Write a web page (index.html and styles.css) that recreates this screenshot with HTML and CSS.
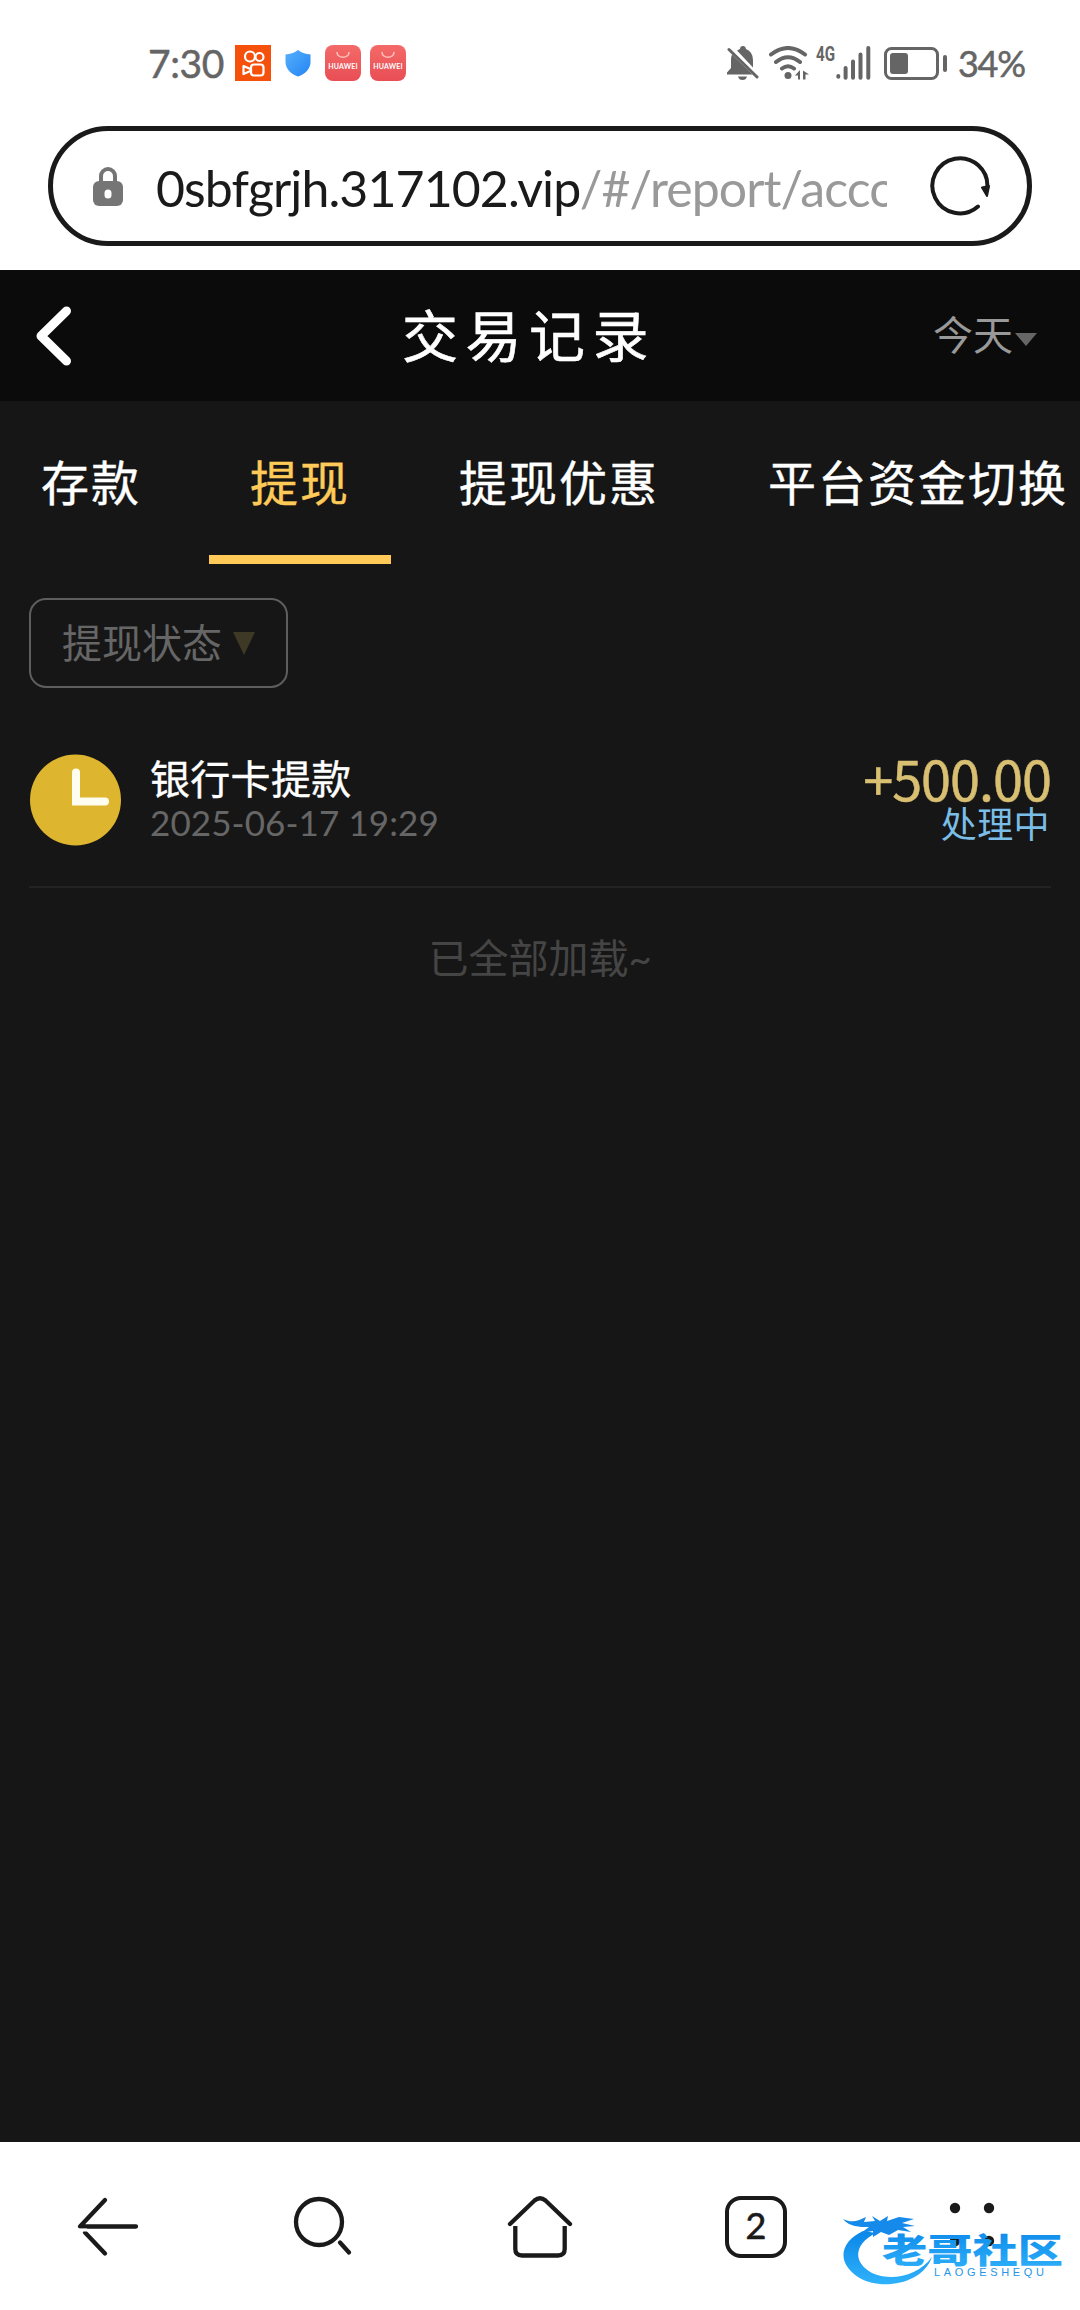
FILE: index.html
```html
<!DOCTYPE html>
<html lang="zh-CN">
<head>
<meta charset="utf-8">
<title>交易记录</title>
<link rel="stylesheet" href="styles.css">
</head>
<body>
<header class="status-bar">
  <span class="clock">7:30</span>
  <svg class="app-icon" width="36" height="36" viewBox="0 0 36 36"><rect width="36" height="36" fill="#f5500c"/><g fill="none" stroke="#fff" stroke-width="2.2" stroke-linejoin="round"><circle cx="15" cy="11.500" r="5"/><circle cx="24.500" cy="12" r="4"/><rect x="16" y="19.500" width="12.500" height="11" rx="3"/><path d="M8.500 21l7.500 3.200v1.600l-7.500 3.200z"/></g></svg>
  <svg class="shield" width="26" height="27" viewBox="0 0 26 27"><defs><linearGradient id="sh" x1="0" y1="0" x2="1" y2="1"><stop offset="0" stop-color="#56b0fb"/><stop offset="1" stop-color="#2384f4"/></linearGradient></defs><path d="M13 0C17 3 21 4 25.500 4.500V12C25.500 19 20 24 13 26.500C6 24 .5 19 .5 12V4.500C5 4 9 3 13 0Z" fill="url(#sh)"/></svg>
  <span class="huawei"><svg class="bag" width="14" height="7" viewBox="0 0 14 7"><path d="M1 0c0 7 12 7 12 0" fill="none" stroke="#ffc0b8" stroke-width="1.600"/></svg>HUAWEI</span>
  <span class="huawei"><svg class="bag" width="14" height="7" viewBox="0 0 14 7"><path d="M1 0c0 7 12 7 12 0" fill="none" stroke="#ffc0b8" stroke-width="1.600"/></svg>HUAWEI</span>
  <span class="system">
    <svg width="32" height="34" viewBox="0 0 32 34"><path d="M10 4.500L13 3Q13 0 16 0Q18.500 0 19 3Q26 6 26 14V21.500ZM5 8.500L25.500 28.500H0V26.500L4 22V14Q4 11 5 8.500ZM11 30.500H20Q19 34 15.500 34Q12 34 11 30.500Z" fill="#656565"/><path d="M2 3.500L30 31" stroke="#656565" stroke-width="3" stroke-linecap="round"/></svg>
    <svg class="wifi" width="41" height="34" viewBox="0 0 41 34"><g fill="none" stroke="#656565" stroke-width="4" stroke-linecap="round"><path d="M2 8.500Q19 -4.500 36 8.500M7 16Q19 6.500 31 16M13 22.500Q19 18 25 22.500"/></g><circle cx="19" cy="29.500" r="3.500" fill="#656565"/><path d="M31 24v9.500h-2v-4h-3zM34 24.500l6 4h-3.500v5h-2.500z" fill="#656565"/></svg>
    <svg class="net" width="26" height="34" viewBox="0 0 26 34"><text x="6" y="15" textLength="19" lengthAdjust="spacingAndGlyphs">4G</text></svg>
    <svg width="35" height="34" viewBox="0 0 35 34"><g stroke="#656565" stroke-width="4" stroke-linecap="round"><path d="M2.300 30v.8M9.600 22v9.800M17 15.500v16.300M24.500 8.500v23.300M32.300 2v29.800"/></g></svg>
    <svg class="battery" width="64" height="34" viewBox="0 0 64 34"><rect x="1.500" y="2.500" width="52" height="30" rx="6" fill="none" stroke="#656565" stroke-width="3"/><rect x="6" y="7" width="18" height="21" rx="3" fill="#656565"/><path d="M61 11v13" stroke="#656565" stroke-width="4" stroke-linecap="round"/></svg>
    <span class="percent">34%</span>
  </span>
</header>

<div class="address-row">
  <div class="address">
    <svg width="30" height="39" viewBox="0 0 30 39"><path d="M8 17V9a7 7 0 0 1 14 0v8" fill="none" stroke="#757575" stroke-width="4"/><rect y="14" width="30" height="25" rx="6" fill="#757575"/><rect x="11.500" y="22.500" width="7" height="9" rx="3.500" fill="#fff"/></svg>
    <div class="url"><span class="host">0sbfgrjh.317102.vip</span><span class="path">/#/report/acco</span></div>
    <svg width="60" height="60" viewBox="0 0 60 60"><path d="M48 50.500A27.500 27.500 0 1 1 57.300 32" fill="none" stroke="#1a1a1a" stroke-width="4" stroke-linecap="round"/><path d="M52 31.500L59 30L57 40Z" fill="#1a1a1a" stroke="#1a1a1a" stroke-width="2" stroke-linejoin="round"/></svg>
  </div>
</div>

<main>
  <div class="page-head">
    <svg class="back" width="36" height="60" viewBox="0 0 36 60"><path d="M30.500 5L5 30L30.500 55" fill="none" stroke="#fff" stroke-width="9" stroke-linecap="round" stroke-linejoin="round"/></svg>
    <h1>交易记录</h1>
    <div class="period">今天<svg width="22" height="13" viewBox="0 0 22 13"><path d="M0 0H22L11 13Z" fill="#666"/></svg></div>
  </div>
  <nav class="tabs">
    <span class="tab">存款</span>
    <span class="tab active">提现</span>
    <span class="tab">提现优惠</span>
    <span class="tab">平台资金切换</span>
  </nav>
  <div class="filter"><span>提现状态</span><svg width="22" height="23" viewBox="0 0 22 23"><path d="M0 0H22L11 23Z" fill="#3e3925"/></svg></div>
  <div class="record">
    <svg width="92" height="92" viewBox="0 0 92 92"><circle cx="46.500" cy="46" r="45.500" fill="#deb52f"/><path d="M47 18.500V47.500H76" fill="none" stroke="#fffdf0" stroke-width="8" stroke-linecap="round"/></svg>
    <div class="info"><div class="name">银行卡提款</div><div class="date">2025-06-17 19:29</div></div>
    <div class="result"><div class="amount">+500.00</div><div class="state">处理中</div></div>
  </div>
  <p class="end">已全部加载~</p>
</main>

<footer class="toolbar">
  <span class="tool"><svg width="64" height="64" viewBox="0 0 64 64"><g fill="none" stroke="#1a1a1a" stroke-width="4.300" stroke-linecap="round" stroke-linejoin="round"><path d="M29 5L4 31.500H60"/><path d="M9 37.500L29 58.500"/></g><path d="M3 36.500h9l-1-3H3z" fill="#fff"/></svg></span>
  <span class="tool"><svg width="64" height="64" viewBox="0 0 64 64"><circle cx="27" cy="27" r="23" fill="none" stroke="#1a1a1a" stroke-width="4.300"/><path d="M48 47.500L57 57.500" stroke="#1a1a1a" stroke-width="4.300" stroke-linecap="round"/></svg></span>
  <span class="tool"><svg width="68" height="64" viewBox="0 0 68 64"><g fill="none" stroke="#1a1a1a" stroke-width="4.300" stroke-linecap="round"><path d="M4 29L28.500 5.500Q34 1 39.500 5.500L64 29"/><path stroke-linecap="butt" d="M9.300 31V54Q9.300 60.500 16 60.500H52Q58.700 60.500 58.700 54V31"/></g></svg></span>
  <span class="tool"><span class="count">2</span></span>
  <span class="tool"><svg width="64" height="64" viewBox="0 0 64 64" fill="#1a1a1a"><circle cx="15" cy="13" r="5.200"/><circle cx="49" cy="13" r="5.200"/><circle cx="15" cy="46" r="5.200"/><circle cx="49" cy="46" r="5.200"/></svg></span>
  <svg class="watermark" width="230" height="76" viewBox="0 0 230 76">
    <defs><linearGradient id="wm" x1="0" y1="0" x2="0" y2="1"><stop offset="0" stop-color="#0a86e8"/><stop offset="1" stop-color="#2fb2fb"/></linearGradient></defs>
    <path d="M22 18C-1 29 -5 49 17 64C39 78 81 72 91 44C77 63 50 69 31 60C11 49 13 31 35 20Z" fill="url(#wm)"/>
    <path d="M2 6C12 11 18 7 25 4L23 9L34 8L31 3L39 8L47 3L46 8L58 4L73 6L61 10L74 13L62 14L70 19L57 17L48 22L40 19L32 24L32 18L20 20L28 14C18 14 9 14 2 6Z" fill="#168aea"/>
    <text class="wm-name" x="41" y="50" textLength="181" lengthAdjust="spacingAndGlyphs" fill="url(#wm)">老哥社区</text>
    <text class="wm-sub" x="93" y="63" textLength="110">LAOGESHEQU</text>
  </svg>
</footer>
</body>
</html>
```
FILE: styles.css
```css
* { box-sizing: border-box; }
body {
  margin: 0;
  width: 1080px;
  height: 2310px;
  display: flex;
  flex-direction: column;
  overflow: hidden;
  background: #fff;
  font-family: Lato, "Noto Sans CJK SC", sans-serif;
}
svg { display: block; flex: none; }

.status-bar {
  height: 126px;
  padding: 0 54px 0 148px;
  display: flex;
  align-items: center;
  color: #656565;
}
.clock { width: 87px; font-size: 39px; letter-spacing: -.4px; -webkit-text-stroke: .5px #656565; }
.shield { margin: 0 14px; }
.huawei {
  width: 36px;
  height: 36px;
  margin-right: 9px;
  border-radius: 8px;
  background: linear-gradient(#f46a68, #e84e55);
  color: #fff;
  font: 700 7px/10px Lato, sans-serif;
  text-align: center;
  letter-spacing: .2px;
}
.bag { margin: 7px auto 2px; }
.system {
  margin-left: auto;
  display: flex;
  align-items: center;
}
.wifi { margin-left: 10px; }
.net { font: 700 20px Roboto, sans-serif; fill: #656565; }
.battery { margin: 0 10px 0 13px; }
.percent {
  width: 68px;
  font-size: 36px;
  letter-spacing: -1.3px;
  white-space: nowrap;
  -webkit-text-stroke: .5px #656565;
}

.address-row { height: 144px; padding: 0 48px; }
.address {
  height: 120px;
  border: 5px solid #1a1a1a;
  border-radius: 60px;
  padding: 0 37px 0 40px;
  display: flex;
  align-items: center;
}
.url {
  width: 732px;
  margin: 3px 43px 0 33px;
  overflow: hidden;
  white-space: nowrap;
  font-size: 50px;
  line-height: 70px;
  letter-spacing: -.9px;
  color: #1a1a1a;
}
.path { color: #999; }

main { height: 1872px; background: #161616; color: #fff; }
.page-head {
  height: 131px;
  padding: 0 43px 0 36px;
  display: flex;
  align-items: center;
  justify-content: space-between;
  background: #0b0b0b;
}
.back { margin-right: 53px; }
h1 {
  margin: 0;
  padding-bottom: 7px;
  font-size: 56px;
  font-weight: 400;
  letter-spacing: 7.5px;
  -webkit-text-stroke: .6px #fff;
}
.period {
  padding-bottom: 5px;
  display: flex;
  align-items: center;
  gap: 2px;
  font-size: 40px;
  color: #999;
}
.period svg { margin-top: 13px; }

.tabs { height: 163px; display: flex; gap: 27px; }
.tab {
  flex: none;
  padding: 0 41px;
  line-height: 163px;
  font-size: 48px;
  letter-spacing: 2px;
  white-space: nowrap;
  -webkit-text-stroke: .4px currentColor;
}
.active { border-bottom: 9px solid #ffca58; color: #ffca58; }

.filter {
  width: 259px;
  height: 90px;
  margin: 34px 0 0 29px;
  padding-left: 31px;
  border: 2px solid #5e5e5e;
  border-radius: 17px;
  display: flex;
  align-items: center;
  gap: 11px;
  font-size: 40px;
  color: #666;
}
.filter span { padding-bottom: 5px; }
.record {
  height: 200px;
  margin: 0 29px;
  padding-top: 66px;
  display: flex;
  border-bottom: 2px solid #232323;
}
.info { margin-left: 29px; }
.name { height: 52px; font-size: 40px; line-height: 50px; letter-spacing: .3px; -webkit-text-stroke: .4px #fff; }
.date { font-size: 35px; line-height: 32px; letter-spacing: .1px; color: #666; }
.result { margin-left: auto; text-align: right; }
.amount {
  height: 52px;
  font: 54px/48px "Noto Sans CJK SC", sans-serif;
  letter-spacing: -1px;
  color: #d9bf72;
  -webkit-text-stroke: .5px #d9bf72;
}
.state { margin-right: 1px; font-size: 36px; line-height: 36px; letter-spacing: .4px; color: #7abde6; }
.end { margin: 41px 0 0; text-align: center; font-size: 40px; line-height: 59px; color: #454545; }

.toolbar {
  position: relative;
  height: 168px;
  padding-top: 2px;
  display: grid;
  grid-template-columns: repeat(5, 216px);
}
.tool { display: flex; align-items: center; justify-content: center; }
.count {
  width: 62px;
  height: 62px;
  border: 4.500px solid #1a1a1a;
  border-radius: 16px;
  text-align: center;
  font-size: 36px;
  line-height: 51px;
  color: #1a1a1a;
  -webkit-text-stroke: .6px #1a1a1a;
}
.watermark { position: absolute; left: 841px; top: 71px; }
.wm-name { font: 900 34px "Noto Sans CJK SC", sans-serif; }
.wm-sub { font: 11px "Liberation Sans", sans-serif; fill: #2596e8; }
```
